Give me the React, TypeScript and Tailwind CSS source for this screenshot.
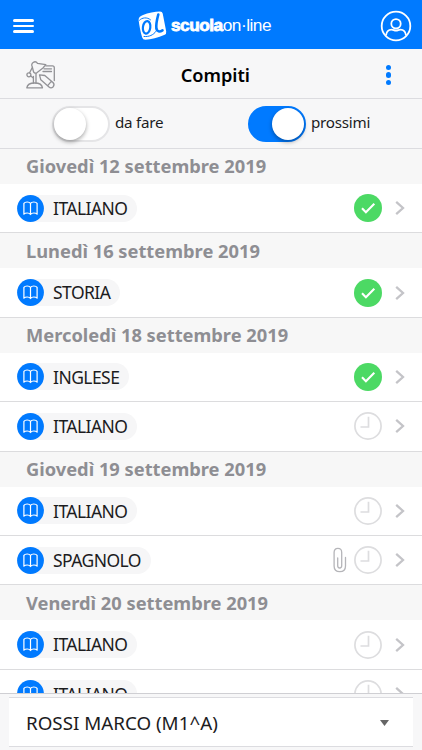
import React, { useState } from 'react';

type Status = 'done' | 'pending';

interface Task {
  subject: string;
  status: Status;
  attachment?: boolean;
}

interface Day {
  label: string;
  tasks: Task[];
}

const days: Day[] = [
  { label: 'Giovedì 12 settembre 2019', tasks: [{ subject: 'ITALIANO', status: 'done' }] },
  { label: 'Lunedì 16 settembre 2019', tasks: [{ subject: 'STORIA', status: 'done' }] },
  {
    label: 'Mercoledì 18 settembre 2019',
    tasks: [
      { subject: 'INGLESE', status: 'done' },
      { subject: 'ITALIANO', status: 'pending' },
    ],
  },
  {
    label: 'Giovedì 19 settembre 2019',
    tasks: [
      { subject: 'ITALIANO', status: 'pending' },
      { subject: 'SPAGNOLO', status: 'pending', attachment: true },
    ],
  },
  {
    label: 'Venerdì 20 settembre 2019',
    tasks: [
      { subject: 'ITALIANO', status: 'pending' },
      { subject: 'ITALIANO', status: 'pending' },
    ],
  },
];

const LogoMark = () => (
  <svg width="29" height="30" viewBox="0 0 29 30">
    <path d="M5 4C10 2 17 .8 22 .6Q24.300 .6 24.700 2.400L28.200 20.500Q28.500 23 26.700 23.700C20 26.500 13 28.200 7.500 28.800Q4.900 28.900 4.200 26.500C2.500 21 1.200 14 .6 9Q.4 5.500 5 4Z" fill="#fff" />
    <g fill="none" stroke="#007aff" strokeLinecap="round">
      <path d="M1.500 9.200C4 6.500 9 5.800 12.500 8.800" strokeWidth="1" />
      <ellipse cx="8.600" cy="16.300" rx="3.700" ry="6.300" strokeWidth="2.200" transform="rotate(8 8.600 16.300)" />
      <path d="M20.300 3.500C18.800 9 17.900 14 18.400 17.800C18.900 20.600 21.500 21.300 24.500 19.300" strokeWidth="2.600" />
      <path d="M6 25.500C11 26 15.500 24 17.800 20.500" strokeWidth="1" />
    </g>
  </svg>
);

const DeskIcon = () => (
  <svg width="30" height="30" viewBox="0 0 30 30" fill="none" stroke="#929296" strokeWidth="1.300" strokeLinecap="round" strokeLinejoin="round">
    <path d="M.8 27.800H16.500C16 24.500 13 23 8.700 23S1.300 24.500 .8 27.800Z" />
    <path d="M7.400 23V16.500M10 23V13.500" />
    <circle cx="2.900" cy="14.800" r="2" />
    <path d="M3.600 12.800L6.300 7.500M4.700 16L7.400 18" />
    <path d="M6.300 6.800A3.100 3.100 0 1 1 11.500 3.300L19.800 4.600L17 8L10.800 12.800Q8 14 7.300 11Z" />
    <path d="M19.800 5.800H26.500Q28.300 5.800 28.300 7.800V20.500M18 8.800H25.500M17 11.500H25.500" />
    <path d="M13.500 14.800L18.800 15.500L27 22.500Q29 24.800 27 27Q25 28.700 23 27L14.800 19.800ZM21.700 25.700L25.500 21.200" />
  </svg>
);

const UserIcon = () => (
  <svg width="32" height="32" viewBox="0 0 32 32" fill="none" stroke="#fff" strokeWidth="1.800">
    <circle cx="16" cy="16" r="14.300" />
    <circle cx="16" cy="13.800" r="4.700" />
    <path d="M6 25.500C6.500 21.500 8.500 19.700 11.500 19.700C13.500 19.700 14 20.700 16 20.700S18.500 19.700 20.500 19.700C23.500 19.700 25.500 21.500 26 25.500" />
  </svg>
);

const BookIcon = () => (
  <svg width="27" height="27" viewBox="0 0 27 27" className="shrink-0">
    <circle cx="13.500" cy="13.500" r="13.400" fill="#007aff" />
    <path
      d="M13.500 8.300Q12.500 7 10.200 7Q7.800 7 6.900 8.300V19.200Q8 18 10.200 18Q12.500 18 13.500 19.500Q14.500 18 16.800 18Q19 18 20.100 19.200V8.300Q19.200 7 16.800 7Q14.500 7 13.500 8.300ZM13.500 8.300V19.500"
      fill="none"
      stroke="#fff"
      strokeWidth="1.200"
      strokeLinejoin="round"
    />
  </svg>
);

const StatusIcon = ({ status }: { status: Status }) => {
  if (status === 'done') {
    return (
      <svg width="28" height="28" viewBox="0 0 28 28">
        <circle cx="14" cy="14" r="14" fill="#4cd964" />
        <path d="M8 14.300L11.900 18.200L20.300 9.800" fill="none" stroke="#fff" strokeWidth="2.100" />
      </svg>
    );
  }
  return (
    <svg width="28" height="28" viewBox="0 0 28 28" fill="none" stroke="#dddddf" strokeWidth="1.700">
      <circle cx="14" cy="14" r="13.100" />
      <path d="M14.500 4.700V15H6.500" />
    </svg>
  );
};

const ClipIcon = () => (
  <svg width="14" height="26" viewBox="0 0 14 26" fill="none" stroke="#b5b5b9" strokeWidth="1.300" strokeLinecap="round">
    <path d="M12.500 10.500V19Q12.500 24.700 6.800 24.700T1.100 19V5.500Q1.100 1.300 4.900 1.300T8.700 5.500V18.500Q8.700 21 6.700 21T4.700 18.500V11" />
  </svg>
);

const Chevron = () => (
  <svg width="10" height="14" viewBox="0 0 10 14" fill="none" stroke="#c4c4c8" strokeWidth="2.300">
    <path d="M1.200 .9L8 7L1.200 13.100" />
  </svg>
);

const Toggle = ({ checked, onClick }: { checked: boolean; onClick: () => void }) => (
  <button
    onClick={onClick}
    className={`flex h-9 w-[58px] items-center rounded-full border-2 ${
      checked ? 'justify-end border-[#007aff] bg-[#007aff]' : 'justify-start border-[#e5e5e7] bg-white'
    }`}
  >
    <span className="size-8 rounded-full bg-white shadow-[0_2px_4px_rgba(0,0,0,0.35)]" />
  </button>
);

const TaskRow = ({ task }: { task: Task }) => (
  <div className="flex h-[49.4px] items-center border-b border-[#dcdcde] bg-white pr-[17px] pl-[17px]">
    <div className="flex h-[27px] items-center rounded-full bg-[#f6f6f7] pr-[10px]">
      <BookIcon />
      <span className="ml-[9px] pt-px text-[17.5px] leading-none tracking-[-0.55px] text-[#1c1c1e]">{task.subject}</span>
    </div>
    <div className="ml-auto flex items-center">
      {task.attachment && (
        <span className="mr-[7px]">
          <ClipIcon />
        </span>
      )}
      <StatusIcon status={task.status} />
      <span className="ml-[13px]">
        <Chevron />
      </span>
    </div>
  </div>
);

const App = () => {
  const [todo, setTodo] = useState(false);
  const [upcoming, setUpcoming] = useState(true);

  return (
    <div className="flex h-[750px] w-[422px] flex-col overflow-hidden bg-[#f7f7f8] font-['Noto_Sans','Open_Sans',sans-serif] text-black">
      <header className="flex h-[49px] shrink-0 items-center justify-between bg-[#007aff] pt-[3px] pr-[10px] pl-[13px]">
        <button className="flex w-[21px] flex-col gap-[3px]">
          <span className="h-[2.500px] rounded-full bg-white" />
          <span className="h-[2.500px] rounded-full bg-white" />
          <span className="h-[2.500px] rounded-full bg-white" />
        </button>
        <div className="flex items-center gap-[4px] pr-[5px] text-white">
          <LogoMark />
          <p className="font-['Liberation_Sans',sans-serif] text-[17.3px] leading-none tracking-[-0.5px] whitespace-nowrap">
            <span className="font-bold [-webkit-text-stroke:0.8px_white]">scuola</span>on·line
          </p>
        </div>
        <UserIcon />
      </header>

      <div className="flex h-[50px] shrink-0 items-center justify-between border-b border-[#dcdce0] pt-[3px] pr-[31px] pl-[26px]">
        <DeskIcon />
        <h1 className="mr-[11px] pt-px text-[18.2px] leading-none font-semibold">Compiti</h1>
        <button className="flex flex-col gap-[2px]">
          <span className="size-[5.300px] rounded-full bg-[#007aff]" />
          <span className="size-[5.300px] rounded-full bg-[#007aff]" />
          <span className="size-[5.300px] rounded-full bg-[#007aff]" />
        </button>
      </div>

      <div className="flex h-[50px] shrink-0 items-center border-b border-[#dcdce0] pl-[52px] text-[15.2px] leading-none tracking-[-0.25px] text-[#1c1c1e]">
        <Toggle checked={todo} onClick={() => setTodo(!todo)} />
        <span className="ml-[5px] w-[133px] pb-px">da fare</span>
        <Toggle checked={upcoming} onClick={() => setUpcoming(!upcoming)} />
        <span className="ml-[5px] pb-px">prossimi</span>
      </div>

      <main className="h-[545px] shrink-0 overflow-hidden border-b border-[#cfcfd3]">
        {days.map((day) => (
          <section key={day.label}>
            <h2 className="flex h-[35px] items-center bg-[#f7f7f7] pl-[26px] text-[18.3px] leading-none font-bold text-[#8e8e93]">
              {day.label}
            </h2>
            {day.tasks.map((task, i) => (
              <TaskRow key={i} task={task} />
            ))}
          </section>
        ))}
      </main>

      <footer className="px-[9px] pt-[3px]">
        <button className="flex h-[50px] w-full items-center justify-between border-y border-[#dcdce0] bg-white pt-[2px] pr-[24px] pl-[17px] text-[18.8px] leading-none text-[#1c1c1e]">
          <span>ROSSI MARCO (M1^A)</span>
          <svg width="9" height="6" viewBox="0 0 9 6">
            <path d="M0 0H9L4.500 6Z" fill="#666" />
          </svg>
        </button>
      </footer>
    </div>
  );
};

export default App;
